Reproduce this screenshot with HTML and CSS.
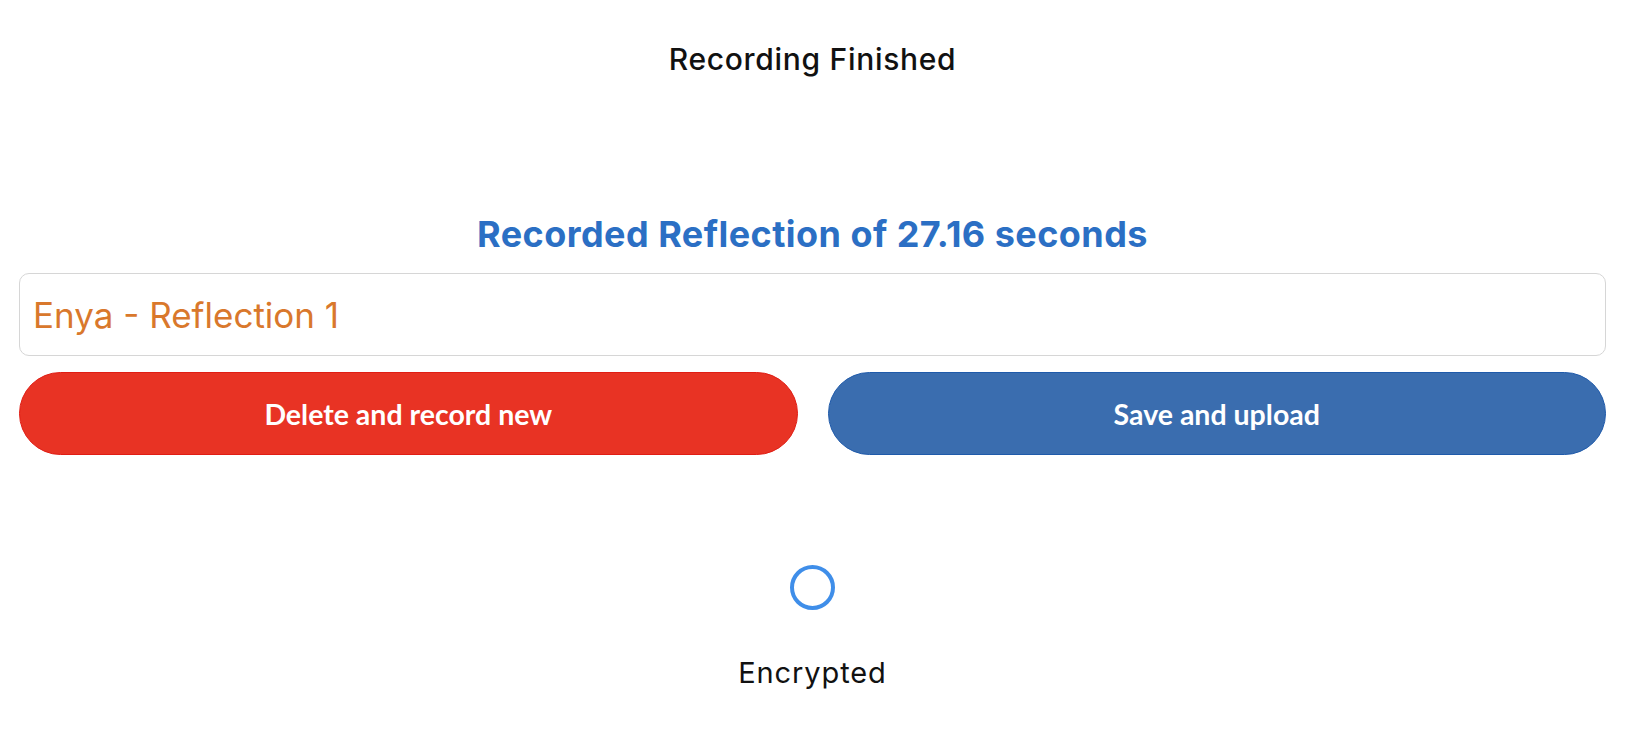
FILE: index.html
```html
<!DOCTYPE html>
<html lang="en">
<head>
<meta charset="utf-8">
<title>Recording Finished</title>
<link rel="stylesheet" href="styles.css">
</head>
<body>
<div class="page">
  <header class="topbar">
    <h1 class="title">Recording Finished</h1>
  </header>
  <main class="content">
    <h2 class="summary">Recorded Reflection of 27.16 seconds</h2>
    <input class="name-input" type="text" value="Enya - Reflection 1">
    <div class="actions">
      <button class="btn btn-delete" type="button">Delete and record new</button>
      <button class="btn btn-save" type="button">Save and upload</button>
    </div>
    <div class="status">
      <div class="spinner"></div>
      <p class="status-label">Encrypted</p>
    </div>
  </main>
</div>
</body>
</html>
```

FILE: styles.css
```css
html, body {
  margin: 0;
  padding: 0;
  background: #ffffff;
}

body {
  font-family: "Inter", "Liberation Sans", sans-serif;
  color: #111111;
}

.page {
  display: flex;
  flex-direction: column;
  padding: 0 22px 0 19px;
}

.topbar {
  display: flex;
  justify-content: center;
  padding-top: 41px;
}

.title {
  margin: 0;
  font-size: 30px;
  line-height: 36px;
  font-weight: 500;
  letter-spacing: 0.7px;
  color: #111111;
}

.content {
  display: flex;
  flex-direction: column;
}

.summary {
  margin: 136px 0 18px;
  text-align: center;
  font-size: 36px;
  line-height: 42px;
  font-weight: 700;
  letter-spacing: 0.45px;
  color: #2b6fc4;
}

.name-input {
  box-sizing: border-box;
  height: 83px;
  width: 100%;
  border: 1px solid #d6d6d6;
  border-radius: 10px;
  padding: 0 13px;
  font-family: "Inter", "Liberation Sans", sans-serif;
  font-size: 35px;
  font-weight: 400;
  color: #d9782c;
  background: #ffffff;
  outline: none;
}

.actions {
  display: grid;
  grid-template-columns: 1fr 1fr;
  gap: 30px;
  margin-top: 16px;
}

.btn {
  box-sizing: border-box;
  height: 83px;
  border-radius: 42px;
  font-family: "Lato", "Liberation Sans", sans-serif;
  font-size: 28.5px;
  font-weight: 700;
  color: #ffffff;
  cursor: pointer;
}

.btn-delete {
  background: #e83324;
  border: 1px solid #e01d14;
}

.btn-save {
  background: #3a6daf;
  border: 1px solid #1f5aaa;
}

.status {
  display: flex;
  flex-direction: column;
  align-items: center;
  margin-top: 110px;
}

.spinner {
  box-sizing: border-box;
  width: 45px;
  height: 45px;
  border: 4px solid #3f8ee9;
  border-radius: 50%;
}

.status-label {
  margin: 46px 0 0;
  font-size: 29px;
  line-height: 34px;
  font-weight: 400;
  letter-spacing: 0.9px;
  color: #111111;
}
```
